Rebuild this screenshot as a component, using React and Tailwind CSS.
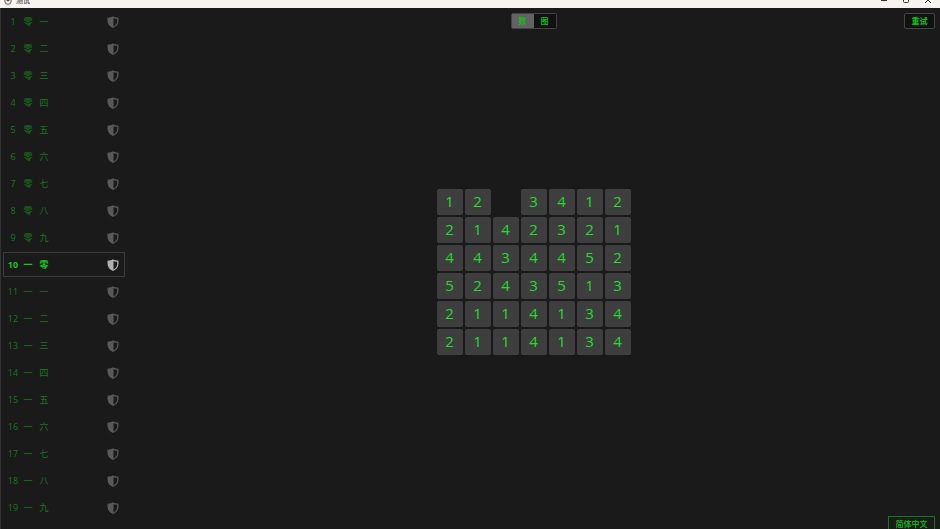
import React, { useState } from "react";
import clsx from "clsx";

const NUMERALS = ["零", "一", "二", "三", "四", "五", "六", "七", "八", "九"];

const levels = Array.from({ length: 20 }, (_, i) => {
  const id = i + 1;
  return { id, tens: NUMERALS[Math.floor(id / 10)], ones: NUMERALS[id % 10] };
});

const board = [
  [1, 2, null, 3, 4, 1, 2],
  [2, 1, 4, 2, 3, 2, 1],
  [4, 4, 3, 4, 4, 5, 2],
  [5, 2, 4, 3, 5, 1, 3],
  [2, 1, 1, 4, 1, 3, 4],
  [2, 1, 1, 4, 1, 3, 4],
];

const ShieldIcon = ({ className }) => (
  <svg viewBox="0 0 24 24" className={className} aria-hidden="true">
    <path
      fill="currentColor"
      fillRule="evenodd"
      d="M12 0.5 C9 2.6 5 3.4 1 3.4 V9 C1 16.5 5.5 21.5 12 24 C18.5 21.5 23 16.5 23 9 V3.4 C19 3.4 15 2.6 12 0.5 Z M13 3.8 C15.2 4.9 17.6 5.5 20.4 5.7 V9.5 C20.4 15 17.6 18.8 13 21 Z"
    />
  </svg>
);

const TitleBar = () => (
  <header className="flex h-2 shrink-0 items-end justify-between overflow-hidden bg-[#f7f3ef] text-[#333]">
    <div className="flex h-[11px] items-start gap-1 pl-1">
      <svg viewBox="0 0 16 16" className="h-2 w-2" fill="none" stroke="currentColor" strokeWidth="1.6" aria-hidden="true">
        <circle cx="8" cy="8" r="6.5" />
        <path d="M8 2v7M5 7h6" />
      </svg>
      <h1 className="text-[7px] leading-2 text-[#222]">测试</h1>
    </div>
    <div className="flex h-3 items-start gap-3 pr-[7px]">
      <button aria-label="Minimize" className="h-2 w-2.5">
        <svg viewBox="0 0 10 8" className="h-2 w-2.5" stroke="currentColor"><path d="M2 4.5h6" /></svg>
      </button>
      <button aria-label="Maximize" className="h-2 w-2.5">
        <svg viewBox="0 0 10 8" className="h-2 w-2.5" stroke="currentColor" fill="none"><rect x="2.5" y="1.5" width="5" height="5" rx="1" /></svg>
      </button>
      <button aria-label="Close" className="h-2 w-2.5">
        <svg viewBox="0 0 10 8" className="h-2 w-2.5" stroke="currentColor"><path d="M2 1l6 6M8 1l-6 6" /></svg>
      </button>
    </div>
  </header>
);

const LevelRow = ({ level, active, onSelect }) => (
  <li>
    <button
      onClick={onSelect}
      className={clsx(
        "flex h-[25px] w-full items-center border pr-1 pl-[3px] text-[9px]",
        active ? "border-[#3c3c3c] font-bold text-[#19c41e]" : "border-transparent text-[#177a1b]"
      )}
    >
      <span className="w-3 text-center">{level.id}</span>
      <span className="ml-[3px] w-3 text-center">{level.tens}</span>
      <span className="ml-1 w-3 text-center">{level.ones}</span>
      <ShieldIcon className={clsx("mr-px ml-auto h-3 w-3", active ? "text-[#b0b0b0]" : "text-[#595959]")} />
    </button>
  </li>
);

const App = () => {
  const [selected, setSelected] = useState(10);
  const [mode, setMode] = useState("数");

  return (
    <div className="h-screen overflow-hidden bg-[#1a1a1a] font-['Open_Sans','Noto_Sans_CJK_SC',sans-serif]">
      <div className="flex h-[calc(100vh+8px)] flex-col">
        <TitleBar />
        <div className="flex min-h-0 flex-1 border-l border-[#333]">
          <nav className="w-[126px] shrink-0 overflow-hidden px-0.5 pt-px">
            <ul className="flex flex-col gap-0.5">
              {levels.map((level) => (
                <LevelRow
                  key={level.id}
                  level={level}
                  active={level.id === selected}
                  onSelect={() => setSelected(level.id)}
                />
              ))}
            </ul>
          </nav>

          <main className="flex min-w-0 flex-1 flex-col py-[5px]">
            <div className="grid grid-cols-[1fr_auto_1fr] px-[5px]">
              <div className="col-start-2 flex h-4 rounded-xs border border-[#444]">
                {["数", "图"].map((name) => (
                  <button
                    key={name}
                    onClick={() => setMode(name)}
                    className={clsx(
                      "flex w-[22px] items-center justify-center text-[8px] font-bold text-[#19b81e]",
                      mode === name ? "bg-[#626262]" : "bg-[#111]"
                    )}
                  >
                    {name}
                  </button>
                ))}
              </div>
              <button className="flex h-4 w-[31px] items-center justify-center justify-self-end rounded-xs border border-[#444] bg-[#111] text-[8px] font-bold text-[#10c814]">
                重试
              </button>
            </div>

            <div className="flex flex-1 items-center justify-center pb-0.5">
              <div className="grid grid-cols-7 gap-0.5">
                {board.flat().map((value, i) =>
                  value === null ? (
                    <span key={i} />
                  ) : (
                    <button
                      key={i}
                      className="flex h-[26px] w-[26px] items-center justify-center rounded-xs bg-[#3e3e3e] text-[15px] text-[#22dd2a]"
                    >
                      {value}
                    </button>
                  )
                )}
              </div>
            </div>

            <button className="mr-[5px] flex h-4 w-[47px] items-center justify-center self-end border border-[#147a18] text-[8px] font-bold text-[#19a81e]">
              简体中文
            </button>
          </main>
        </div>
      </div>
    </div>
  );
};

export default App;
